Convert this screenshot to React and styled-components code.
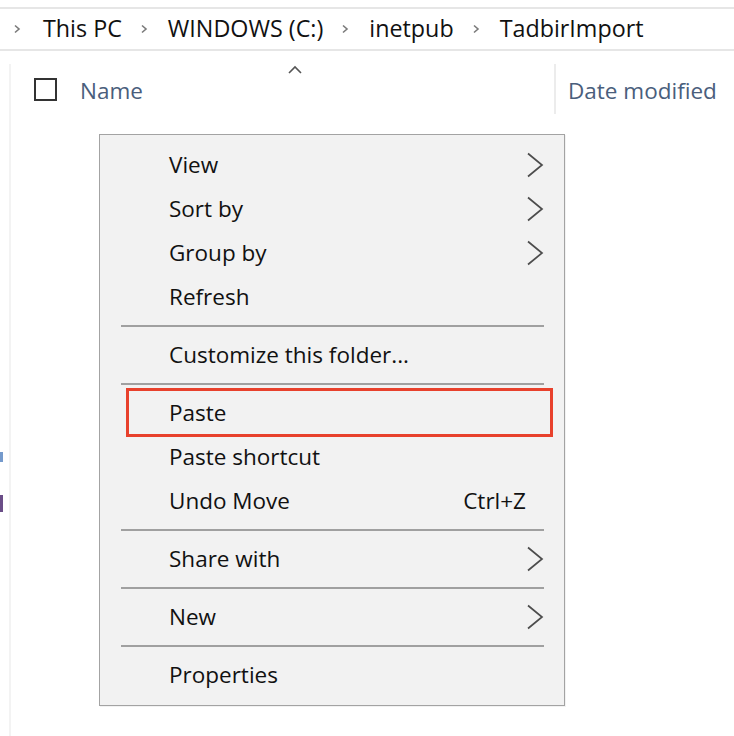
import React from 'react';
import styled, { createGlobalStyle } from 'styled-components';

const GlobalStyle = createGlobalStyle`
  html, body {
    margin: 0;
    padding: 0;
    background: #fff;
  }
  body {
    font-family: "Open Sans", "Noto Sans", sans-serif;
  }
`;

const Window = styled.div`
  position: relative;
  width: 734px;
  height: 736px;
  overflow: hidden;
  background: #fff;
  padding-top: 7px;
  box-sizing: border-box;
`;

const AddressBar = styled.div`
  display: flex;
  align-items: center;
  height: 40px;
  box-sizing: content-box;
  border-top: 2px solid #e6e6e6;
  border-bottom: 2px solid #e6e6e6;
  padding-left: 13px;
  font-size: 23.3px;
  color: #111;
`;

const Crumb = styled.span`
  white-space: nowrap;
  margin-top: -3px;
`;

const CrumbArrow = styled.svg`
  width: 8px;
  height: 10px;
  margin: 0 ${p => (p.first ? '22px' : '20px')} 0 ${p => (p.first ? '0' : '18px')};
  flex: none;
`;

const Body = styled.div`
  display: flex;
  height: 686px;
  margin-top: 13px;
`;

const LeftStrip = styled.div`
  width: 9px;
  flex: none;
  display: flex;
  flex-direction: column;
  padding-top: 388px;
  gap: 33px;
  overflow: hidden;
`;

const Stub = styled.div`
  width: 3px;
  height: ${p => p.h}px;
  background: ${p => p.color};
  opacity: ${p => p.o};
`;

const Content = styled.div`
  flex: 1;
  border-left: 2px solid #f3f3f3;
`;

const HeaderRow = styled.div`
  display: flex;
  height: 50px;
  align-items: center;
`;

const NameCol = styled.div`
  position: relative;
  display: flex;
  align-items: center;
  width: 543px;
  padding-left: 23px;
  box-sizing: border-box;
  height: 100%;
`;

const Checkbox = styled.div`
  width: 19px;
  height: 19px;
  border: 2px solid #333;
  margin-right: 23px;
  margin-top: 1px;
`;

const HeaderLabel = styled.span`
  font-size: 22.5px;
  color: #4a5e7c;
  white-space: nowrap;
  margin-top: 2px;
`;

const SortCaret = styled.svg`
  position: absolute;
  left: 276px;
  top: 1px;
  width: 16px;
  height: 9px;
`;

const ColDivider = styled.div`
  width: 2px;
  height: 100%;
  background: #ececec;
  margin-right: 12px;
`;

const Menu = styled.div`
  position: absolute;
  left: 99px;
  top: 134px;
  width: 466px;
  box-sizing: border-box;
  background: #f2f2f2;
  border: 1.5px solid #a3a3a3;
  padding: 8px 0;
  font-size: 22.5px;
  color: #111;
  box-shadow: 1px 1px 0 rgba(0, 0, 0, 0.05);
`;

const Item = styled.div`
  position: relative;
  display: flex;
  align-items: center;
  height: 44px;
  padding: 0 20px 0 69px;
`;

const ItemLabel = styled.span`
  flex: 1;
  white-space: nowrap;
  margin-top: -1px;
`;

const Shortcut = styled.span`
  margin-right: 18px;
  margin-top: -1px;
`;

const Chevron = styled.svg`
  width: 18px;
  height: 26px;
  flex: none;
`;

const Separator = styled.div`
  height: 14px;
  display: flex;
  align-items: center;
  padding: 0 20px 0 21px;
  &::after {
    content: '';
    flex: 1;
    height: 2px;
    background: #a0a0a0;
  }
`;

const Highlight = styled.div`
  position: absolute;
  left: 26px;
  right: 11px;
  top: -3px;
  bottom: -2px;
  border: 3px solid #e8412c;
`;

const SmallArrow = ({ first }) => (
  <CrumbArrow first={first} viewBox="0 0 8 10">
    <path d="M2 1.5 L6 5 L2 8.5" fill="none" stroke="#7a7a7a" strokeWidth="1.6" />
  </CrumbArrow>
);

const SubArrow = () => (
  <Chevron viewBox="0 0 18 26">
    <path d="M2 1.5 L16 13 L2 24.5" fill="none" stroke="#4d4d4d" strokeWidth="1.7" />
  </Chevron>
);

const menu = [
  { label: 'View', sub: true },
  { label: 'Sort by', sub: true },
  { label: 'Group by', sub: true },
  { label: 'Refresh' },
  'sep',
  { label: 'Customize this folder...' },
  'sep',
  { label: 'Paste', marked: true },
  { label: 'Paste shortcut' },
  { label: 'Undo Move', shortcut: 'Ctrl+Z' },
  'sep',
  { label: 'Share with', sub: true },
  'sep',
  { label: 'New', sub: true },
  'sep',
  { label: 'Properties' },
];

const crumbs = ['This PC', 'WINDOWS (C:)', 'inetpub', 'TadbirImport'];

export default function App() {
  return (
    <Window>
      <GlobalStyle />
      <AddressBar>
        {crumbs.map((c, i) => (
          <React.Fragment key={c}>
            <SmallArrow first={i === 0} />
            <Crumb>{c}</Crumb>
          </React.Fragment>
        ))}
      </AddressBar>
      <Body>
        <LeftStrip>
          <Stub h={10} color="#3b6fb6" o={0.7} />
          <Stub h={17} color="#5a3a7a" o={0.9} />
        </LeftStrip>
        <Content>
          <HeaderRow>
            <NameCol>
              <Checkbox />
              <HeaderLabel>Name</HeaderLabel>
              <SortCaret viewBox="0 0 16 9">
                <path d="M2 8 L8 2 L14 8" fill="none" stroke="#555" strokeWidth="1.6" />
              </SortCaret>
            </NameCol>
            <ColDivider />
            <HeaderLabel>Date modified</HeaderLabel>
          </HeaderRow>
        </Content>
      </Body>
      <Menu>
        {menu.map((m, i) =>
          m === 'sep' ? (
            <Separator key={i} />
          ) : (
            <Item key={i}>
              <ItemLabel>{m.label}</ItemLabel>
              {m.shortcut && <Shortcut>{m.shortcut}</Shortcut>}
              {m.sub && <SubArrow />}
              {m.marked && <Highlight />}
            </Item>
          )
        )}
      </Menu>
    </Window>
  );
}
